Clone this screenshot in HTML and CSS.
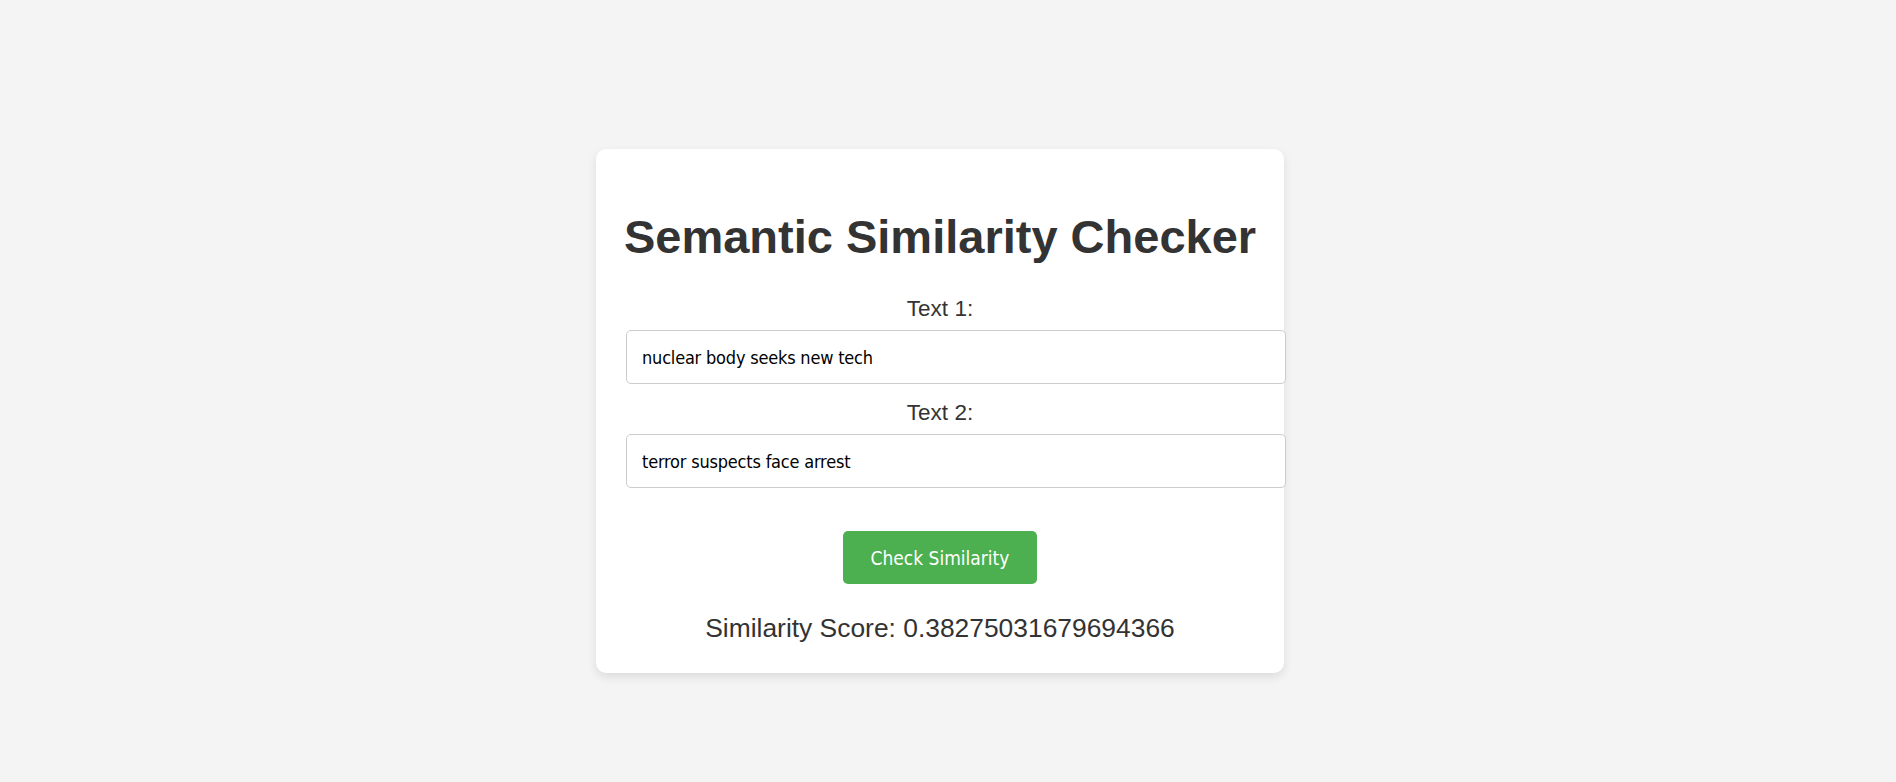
FILE: index.html
```html
<!DOCTYPE html>
<html lang="en">
<head>
<meta charset="utf-8">
<title>Semantic Similarity Checker</title>
<link rel="stylesheet" href="styles.css">
</head>
<body>
  <main class="card">
    <h1 class="title">Semantic Similarity Checker</h1>
    <form class="form">
      <label class="label" for="text1">Text 1:</label>
      <input class="field" id="text1" type="text" value="nuclear body seeks new tech">
      <label class="label" for="text2">Text 2:</label>
      <input class="field" id="text2" type="text" value="terror suspects face arrest">
      <button class="btn" type="button">Check Similarity</button>
    </form>
    <p class="score">Similarity Score: 0.38275031679694366</p>
  </main>
</body>
</html>
```

FILE: styles.css
```css
html, body {
  height: 100%;
}

body {
  margin: 0;
  padding: 149px 16px 0 0;
  box-sizing: border-box;
  background: #f4f4f4;
  font-family: "Liberation Sans", Arial, sans-serif;
  color: #333;
  display: flex;
  justify-content: center;
  align-items: flex-start;
}

.card {
  width: 688px;
  box-sizing: border-box;
  padding: 30px;
  background: #fff;
  border-radius: 10px;
  box-shadow: 0 4px 10px rgba(0, 0, 0, 0.1);
  text-align: center;
}

.title {
  margin: 31px -10px 32px;
  font-size: 47px;
  line-height: 54px;
  font-weight: bold;
  white-space: nowrap;
  color: #333;
}

.form {
  margin: 0;
}

.label {
  display: block;
  font-size: 22.5px;
  line-height: 26px;
  margin-bottom: 8px;
  color: #333;
}

.field {
  display: block;
  box-sizing: content-box;
  width: 100%;
  height: 52px;
  padding: 0 15px;
  margin: 0 0 16px;
  border: 1px solid #ccc;
  border-radius: 5px;
  background: #fff;
  font-family: "DejaVu Sans Condensed", "DejaVu Sans", sans-serif;
  font-size: 18px;
  letter-spacing: -0.2px;
  color: #000;
  outline: none;
}

.btn {
  display: block;
  width: 194px;
  height: 53px;
  margin: 43px auto 0;
  padding: 0;
  border: none;
  border-radius: 5px;
  background: #4caf50;
  color: #fff;
  font-family: "DejaVu Sans Condensed", "DejaVu Sans", sans-serif;
  font-size: 19px;
  cursor: pointer;
}

.score {
  margin: 29px 0 0;
  font-size: 26.4px;
  line-height: 30px;
  color: #333;
}
```
